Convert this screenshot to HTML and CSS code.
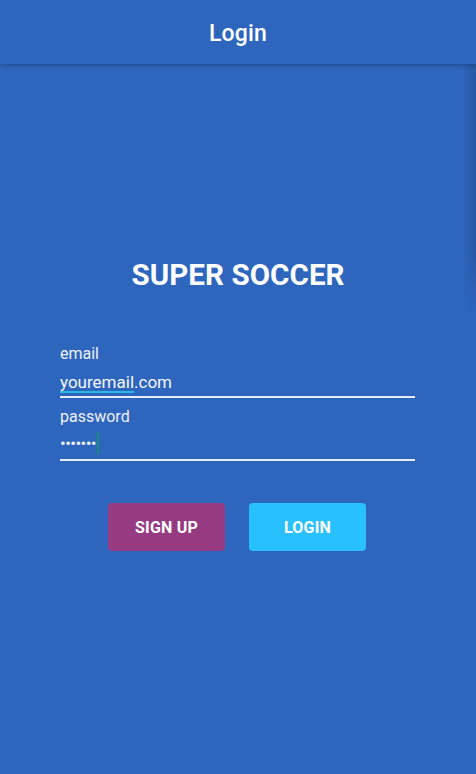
FILE: index.html
```html
<!DOCTYPE html>
<html>
<head>
<meta charset="utf-8">
<link rel="stylesheet" href="styles.css">
</head>
<body>
<div class="app">
  <header class="bar"><h1 class="bar-title">Login</h1></header>
  <div class="edge-shadow"></div>
  <main class="content">
    <h2 class="brand">SUPER SOCCER</h2>
    <form class="form">
      <label class="field">
        <span class="label">email</span>
        <span class="value"><span class="marked">youremail</span>.com</span>
      </label>
      <label class="field">
        <span class="label">password</span>
        <span class="value dots">•••••••<span class="cursor"></span></span>
      </label>
    </form>
    <div class="actions">
      <button class="btn signup" type="button">SIGN UP</button>
      <button class="btn login" type="button">LOGIN</button>
    </div>
  </main>
</div>
</body>
</html>
```
FILE: styles.css
```css
html, body {
  margin: 0;
  padding: 0;
}
body {
  background: #2e66be;
  font-family: Roboto, "Noto Sans", sans-serif;
  color: #fff;
}
.app {
  position: relative;
  width: 476px;
  height: 774px;
  overflow: hidden;
  background: #2e66be;
}
.bar {
  height: 64px;
  display: flex;
  align-items: center;
  justify-content: center;
  background: #2e66be;
  box-shadow: 0 2px 4px rgba(0,0,0,0.22);
  position: relative;
  z-index: 2;
}
.bar-title {
  margin: 0;
  font-size: 23px;
  font-weight: 500;
  letter-spacing: 0.2px;
  padding-top: 2px;
}
.edge-shadow {
  position: absolute;
  right: 0;
  top: 64px;
  width: 14px;
  height: 250px;
  background: linear-gradient(to right, rgba(0,0,0,0), rgba(0,0,0,0.14));
  -webkit-mask-image: linear-gradient(to bottom, #000 75%, transparent);
  mask-image: linear-gradient(to bottom, #000 75%, transparent);
}
.content {
  display: flex;
  flex-direction: column;
  align-items: center;
  padding-top: 193px;
}
.brand {
  margin: 0;
  font-size: 29.5px;
  font-weight: 700;
  line-height: 36px;
  letter-spacing: 0.1px;
}
.form {
  width: 355px;
  margin-top: 51px;
  margin-right: 1px;
  display: flex;
  flex-direction: column;
  gap: 9px;
}
.field {
  display: flex;
  flex-direction: column;
  border-bottom: 2px solid #e6ecf6;
  height: 54px;
  box-sizing: border-box;
}
.label {
  font-size: 16px;
  line-height: 20px;
  color: #edf0f7;
}
.value {
  font-size: 17px;
  line-height: 22px;
  margin-top: 7px;
  color: #f4f6fb;
  position: relative;
}
.marked {
  text-decoration: underline;
  text-decoration-color: #2ab6e6;
  text-decoration-thickness: 2px;
  text-underline-offset: 3px;
  text-decoration-skip-ink: none;
}
.dots {
  font-size: 17px;
  letter-spacing: -0.6px;
  display: flex;
  align-items: center;
  margin-top: 4px;
  height: 24px;
}
.cursor {
  display: inline-block;
  width: 2px;
  height: 22px;
  background: #12907e;
  margin-left: 1px;
}
.actions {
  display: flex;
  gap: 24px;
  margin-top: 42px;
  margin-right: 2px;
}
.btn {
  width: 117px;
  height: 48px;
  border: none;
  border-radius: 4px;
  color: #fff;
  font-family: Roboto, "Noto Sans", sans-serif;
  font-size: 16px;
  font-weight: 700;
  letter-spacing: 0.2px;
}
.signup {
  background: #963a82;
}
.login {
  background: #29c0ff;
}
```
